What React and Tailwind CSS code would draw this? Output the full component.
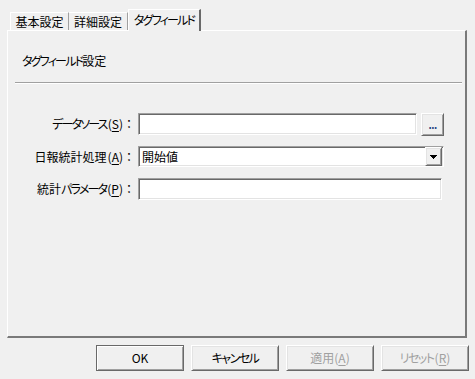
import React from "react";

const font = "font-['Noto_Sans_CJK_JP','Noto_Sans',sans-serif] [font-feature-settings:'palt']";

function K({ children, t = "tracking-[-1.8px]" }) {
  return <span className={t}>{children}</span>;
}

function Sunken({ className = "", children }) {
  return (
    <div
      className={`bg-white border-t border-l border-t-[#a0a0a0] border-l-[#a0a0a0] border-b border-r border-b-white border-r-white shadow-[inset_1px_1px_0_#696969,inset_-1px_-1px_0_#e3e3e3] ${className}`}
    >
      {children}
    </div>
  );
}

function Raised({ className = "", children }) {
  return (
    <div
      className={`bg-[#f0f0f0] border-t border-l border-t-white border-l-white border-b border-r border-b-[#696969] border-r-[#696969] shadow-[inset_1px_1px_0_#e3e3e3,inset_-1px_-1px_0_#a0a0a0] ${className}`}
    >
      {children}
    </div>
  );
}

function Label({ children, k }) {
  return (
    <div className="w-[124px] flex justify-end items-center text-[12px] text-black leading-none whitespace-nowrap">
      {children}
      <span className="ml-[1px]">(</span>
      <span className="underline underline-offset-2">{k}</span>
      <span>)</span>
      <span className="ml-[3px]">：</span>
    </div>
  );
}

export default function App() {
  return (
    <div className={`w-[475px] h-[379px] bg-[#f0f0f0] overflow-hidden ${font}`}>
      {/* tabs */}
      <div className="flex items-end pl-[10px] pt-[9px] h-[30px]">
        <div className="w-[59px] h-[18px] border-t border-l border-t-white border-l-white border-r border-r-[#a0a0a0] flex items-center justify-center text-[12px] text-black leading-none whitespace-nowrap">
          基本設定
        </div>
        <div className="w-[59px] h-[18px] border-t border-t-white border-r border-r-[#a0a0a0] flex items-center justify-center text-[12px] text-black leading-none whitespace-nowrap">
          詳細設定
        </div>
        <div className="relative z-10 -mb-px w-[73px] h-[22px] bg-[#f0f0f0] border-t border-l border-t-white border-l-white border-r-2 border-r-[#696969] flex items-center justify-center pb-[2px] text-[12px] text-black leading-none whitespace-nowrap">
          <K>タグフィールド</K>
        </div>
      </div>

      {/* panel */}
      <div className="ml-[7px] mr-[8px] h-[308px] border-t border-l border-t-white border-l-white border-r-2 border-b-2 border-r-[#7a7a7a] border-b-[#7a7a7a] flex flex-col">
        <div className="pl-[14px] mt-[22px] text-[12px] leading-[16px] text-black whitespace-nowrap">
          <K>タグフィールド</K>設定
        </div>
        <div className="ml-[7px] mr-[3px] mt-[13px] h-[2px] border-t border-t-[#a0a0a0] border-b border-b-white" />

        {/* row 1 */}
        <div className="flex items-center mt-[29px] h-[22px]">
          <Label k="S"><K>データソース</K></Label>
          <Sunken className="ml-[6px] w-[279px] h-[22px]" />
          <Raised className="ml-[4px] w-[23px] h-[23px] flex items-center justify-center">
            <span className="text-[10px] leading-none font-bold text-[#1f3f7f] tracking-[-0.5px] mt-[2px]">...</span>
          </Raised>
        </div>

        {/* row 2 */}
        <div className="flex items-center mt-[11px] h-[21px]">
          <Label k="A">日報統計処理</Label>
          <Sunken className="ml-[6px] w-[306px] h-[21px] flex items-center justify-between pl-[3px] pr-[1px]">
            <span className="text-[12px] leading-none text-black">開始値</span>
            <Raised className="w-[17px] h-[19px] flex items-center justify-center">
              <svg width="7" height="4" viewBox="0 0 7 4" shapeRendering="crispEdges">
                <rect x="0" y="0" width="7" height="1" fill="#000" />
                <rect x="1" y="1" width="5" height="1" fill="#000" />
                <rect x="2" y="2" width="3" height="1" fill="#000" />
                <rect x="3" y="3" width="1" height="1" fill="#000" />
              </svg>
            </Raised>
          </Sunken>
        </div>

        {/* row 3 */}
        <div className="flex items-center mt-[11px] h-[22px]">
          <Label k="P">統計<K>パラメータ</K></Label>
          <Sunken className="ml-[6px] w-[304px] h-[22px]" />
        </div>
      </div>

      {/* buttons */}
      <div className="flex justify-end gap-[7px] pr-[6px] mt-[7px]">
        <div className="w-[88px] h-[26px] border border-[#696969] shadow-[inset_1px_1px_0_#ffffff,inset_-1px_-1px_0_#a0a0a0] flex items-center justify-center text-[12px] text-black leading-none">
          OK
        </div>
        <Raised className="w-[88px] h-[26px] flex items-center justify-center text-[12px] text-black leading-none whitespace-nowrap">
          <K t="tracking-[-1.5px]">キャンセル</K>
        </Raised>
        <Raised className="w-[88px] h-[26px] flex items-center justify-center text-[12px] text-[#a0a0a0] leading-none whitespace-nowrap">
          <span>適用(</span>
          <span className="underline underline-offset-2">A</span>
          <span>)</span>
        </Raised>
        <Raised className="w-[88px] h-[26px] flex items-center justify-center text-[12px] text-[#a0a0a0] leading-none whitespace-nowrap">
          <K t="tracking-[-1.5px]">リセット</K>
          <span className="ml-[1px]">(</span>
          <span className="underline underline-offset-2">R</span>
          <span>)</span>
        </Raised>
      </div>
    </div>
  );
}
